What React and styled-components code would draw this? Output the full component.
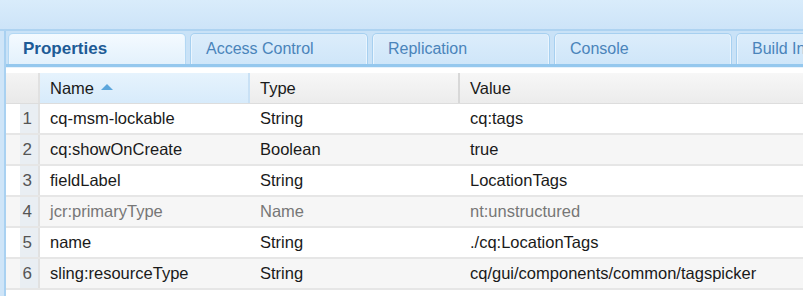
import React from 'react'
import styled, { createGlobalStyle } from 'styled-components'

const GlobalStyle = createGlobalStyle`
  html, body {
    margin: 0;
    padding: 0;
    background: #d4e8fa;
    font-family: "Liberation Sans", Arial, sans-serif;
    overflow: hidden;
  }
`

const Page = styled.div`
  width: 803px;
  height: 296px;
  display: flex;
  flex-direction: column;
  background: #cfe5f8;
`

const TopBand = styled.div`
  height: 29px;
  background: linear-gradient(#d9ecfb, #cde4f8);
  border-bottom: 2px solid #aed3f1;
`

const Frame = styled.div`
  flex: 1;
  margin-left: 4px;
  border-left: 2px solid #a9d1f1;
  background: #c9e2f7;
  display: flex;
  flex-direction: column;
  min-height: 0;
`

const TabStrip = styled.div`
  display: flex;
  gap: 4px;
  padding: 2px 0 0 2px;
  height: 31px;
  border-bottom: 3px solid #95c8ee;
  overflow: hidden;
`

const Tab = styled.div`
  flex: 0 0 auto;
  width: 178px;
  box-sizing: border-box;
  border: 1px solid ${p => (p.$active ? '#b3d8f4' : '#a7d0f0')};
  border-bottom: none;
  border-radius: 5px 5px 0 0;
  background: ${p =>
    p.$active
      ? 'linear-gradient(#f4faff, #e3f1fc)'
      : 'linear-gradient(#dcedfb, #cfe6f9)'};
  box-shadow: inset 1px 0 0 #eaf5fe, inset -1px 0 0 #eaf5fe;
  padding: ${p => (p.$active ? '5px 0 0 14px' : '6px 0 0 15px')};
  font-size: ${p => (p.$active ? 17 : 16)}px;
  font-weight: ${p => (p.$active ? 700 : 400)};
  color: ${p => (p.$active ? '#1d5b96' : '#4a84ba')};
  white-space: nowrap;
`

const Grid = styled.div`
  flex: 1;
  background: #ffffff;
  border-top: 1px solid #e6f2fc;
  padding-top: 5px;
  display: flex;
  flex-direction: column;
`

const Row = styled.div`
  display: grid;
  grid-template-columns: 34px 210px 210px 1fr;
  height: 29px;
  border-bottom: 2px solid #e6e6e6;
  background: ${p => (p.$alt ? '#f6f6f6' : '#ffffff')};
  font-size: 16.5px;
  color: ${p => (p.$muted ? '#777777' : '#1a1a1a')};
`

const HeaderRow = styled(Row)`
  height: 30px;
  border-bottom: 1px solid #dddddd;
  background: linear-gradient(#f7f7f7, #ececec);
  color: #1a1a1a;
`

const NumCell = styled.div`
  display: flex;
  align-items: center;
  justify-content: flex-end;
  padding-right: 6px;
  font-size: 17px;
  background: ${p =>
    p.$head
      ? 'linear-gradient(#f4f4f4, #e9e9e9)'
      : 'linear-gradient(to right, transparent 14px, #e9eef3 14px)'};
  border-right: 2px solid #e1e1e1;
  color: #555555;
`

const Cell = styled.div`
  display: flex;
  align-items: center;
  padding-left: 10px;
  white-space: nowrap;
  overflow: hidden;
`

const HeadCell = styled(Cell)`
  background: ${p => (p.$sorted ? 'linear-gradient(#e6f3fd, #d7ebfb)' : 'transparent')};
  border-right: 2px solid ${p => (p.$last ? 'transparent' : p.$sorted ? '#c9e1f5' : '#d8d8d8')};
`

const SortArrow = styled.span`
  display: inline-block;
  margin-left: 7px;
  margin-top: -2px;
  width: 0;
  height: 0;
  border-left: 6px solid transparent;
  border-right: 6px solid transparent;
  border-bottom: 6px solid #5ca6dc;
`

const tabs = ['Properties', 'Access Control', 'Replication', 'Console', 'Build Info']

const rows = [
  { name: 'cq-msm-lockable', type: 'String', value: 'cq:tags' },
  { name: 'cq:showOnCreate', type: 'Boolean', value: 'true' },
  { name: 'fieldLabel', type: 'String', value: 'LocationTags' },
  { name: 'jcr:primaryType', type: 'Name', value: 'nt:unstructured', muted: true },
  { name: 'name', type: 'String', value: './cq:LocationTags' },
  { name: 'sling:resourceType', type: 'String', value: 'cq/gui/components/common/tagspicker' }
]

const App = () => {
  return (
    <>
      <GlobalStyle />
      <Page>
        <TopBand />
        <Frame>
          <TabStrip>
            {tabs.map((t, i) => (
              <Tab key={t} $active={i === 0}>{t}</Tab>
            ))}
          </TabStrip>
          <Grid>
            <HeaderRow>
              <NumCell $head />
              <HeadCell $sorted>
                Name
                <SortArrow />
              </HeadCell>
              <HeadCell>Type</HeadCell>
              <HeadCell $last>Value</HeadCell>
            </HeaderRow>
            {rows.map((r, i) => (
              <Row key={r.name} $alt={i % 2 === 1} $muted={r.muted}>
                <NumCell>{i + 1}</NumCell>
                <Cell>{r.name}</Cell>
                <Cell>{r.type}</Cell>
                <Cell>{r.value}</Cell>
              </Row>
            ))}
          </Grid>
        </Frame>
      </Page>
    </>
  )
}

export default App
